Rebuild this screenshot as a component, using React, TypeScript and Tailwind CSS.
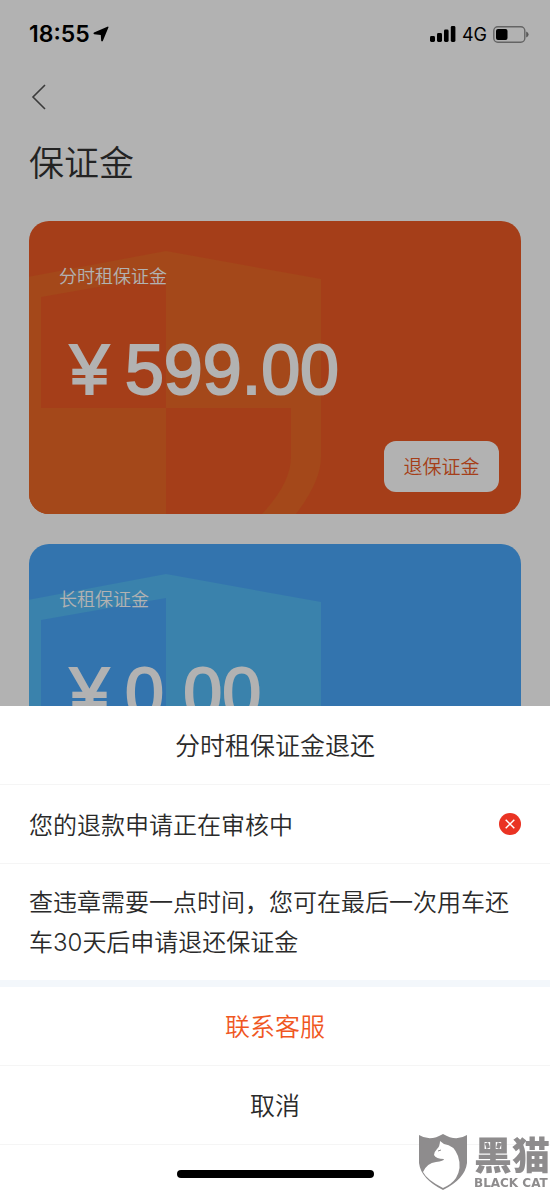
import { ReactNode } from "react";

const ShieldPattern = ({ className }: { className: string }) => (
  <svg
    viewBox="0 0 292 293"
    className={`absolute left-0 top-0 h-[293px] w-[292px] ${className}`}
    fill="currentColor"
    aria-hidden="true"
  >
    <path
      fillRule="evenodd"
      d="M-18 59 L137 30 L292 58 V236 Q292 260 267 293 H-18 Z M12 76 V187 H137 V54 Z M137 187 V293 H233 Q262 262 262 236 V187 Z"
    />
  </svg>
);

const StatusBar = () => (
  <div className="flex h-[68px] items-center justify-between pl-[29px] pr-[21px] font-['Inter',sans-serif] text-black">
    <div className="flex items-center gap-[3px]">
      <span className="text-[23px] font-semibold">18:55</span>
      <svg viewBox="0 0 16 16" className="h-4 w-4" aria-hidden="true">
        <path d="M15 .6 Q15.8 .6 15.4 1.6 L9.8 15 Q8.9 16 8.2 14.8 L7.8 8.9 L1.2 8.3 Q-.2 7.4 1 6.5 L14.4 .8 Z" />
      </svg>
    </div>
    <div className="flex items-center gap-[6px]">
      <svg viewBox="0 0 26 16" className="h-4 w-[26px]" aria-hidden="true">
        <rect x="0" y="10" width="5" height="6" rx="1.4" />
        <rect x="7" y="7" width="5" height="9" rx="1.4" />
        <rect x="14" y="3.5" width="4.6" height="12.5" rx="1.4" />
        <rect x="20.8" y="0" width="4.6" height="16" rx="1.4" />
      </svg>
      <span className="text-[18px]">4G</span>
      <svg viewBox="0 0 36 17" className="h-[17px] w-9" aria-hidden="true">
        <rect x=".8" y=".8" width="31" height="15.4" rx="4" fill="none" stroke="#909090" strokeWidth="1.4" />
        <rect x="3" y="3" width="11.5" height="11" rx="2" />
        <path d="M33.2 5.5 Q35.6 6.5 35.6 8.5 T33.2 11.5 Z" fill="#808080" />
      </svg>
    </div>
  </div>
);

type DepositCardProps = {
  label: string;
  amount: string;
  className: string;
  patternClassName: string;
  children?: ReactNode;
};

const DepositCard = ({ label, amount, className, patternClassName, children }: DepositCardProps) => (
  <section className={`relative h-[293px] overflow-hidden rounded-[20px] text-white ${className}`}>
    <ShieldPattern className={patternClassName} />
    <div className="relative flex h-full flex-col px-[30px] pt-[42px] pb-[22px]">
      <h2 className="text-lg leading-6 font-[350]">{label}</h2>
      <p className="mt-[43px] flex gap-4 pl-[11px] font-['Liberation_Sans',sans-serif] text-[70px] leading-[80px] [-webkit-text-stroke:2px_white]">
        <span>¥</span>
        <span>{amount}</span>
      </p>
      {children}
    </div>
  </section>
);

const RefundSheet = () => (
  <div
    role="dialog"
    aria-labelledby="sheet-title"
    className="fixed inset-x-0 bottom-0 bg-white pb-[45px] text-2xl font-[350] text-[#2a2a2a]"
  >
    <h2
      id="sheet-title"
      className="flex h-[79px] items-center justify-center border-b border-[#f5f5f5] text-[25px]"
    >
      分时租保证金退还
    </h2>
    <div className="flex h-[79px] items-center justify-between border-b border-[#f5f5f5] px-[29px]">
      <span>您的退款申请正在审核中</span>
      <svg viewBox="0 0 22 22" className="h-[22px] w-[22px]" aria-hidden="true">
        <circle cx="11" cy="11" r="11" fill="#ea3323" />
        <path d="M6.7 6.7 L15.3 15.3 M15.3 6.7 L6.7 15.3" stroke="#fff" strokeWidth="1.5" />
      </svg>
    </div>
    <p className="border-b-[7px] border-[#f3f7fb] px-[29px] pt-[17px] pb-[17px] leading-10">
      查违章需要一点时间，您可在最后一次用车还车
      <span className="font-['Inter',sans-serif]">30</span>
      天后申请退还保证金
    </p>
    <button
      type="button"
      className="block h-[79px] w-full border-b border-[#f5f5f5] text-[25px] text-[#f0571f]"
    >
      联系客服
    </button>
    <button type="button" className="block h-[79px] w-full border-b border-[#f5f5f5] text-[25px]">
      取消
    </button>
    <div className="absolute inset-x-0 bottom-3 mx-auto h-2 w-[197px] rounded-full bg-black" />
  </div>
);

const Watermark = () => (
  <div className="fixed right-0 bottom-0 flex items-end gap-[7px] text-[#8e8c8d]">
    <svg viewBox="0 0 48 56" className="h-14 w-12" aria-hidden="true">
      <path
        fill="currentColor"
        d="M0 1 Q11 8 24 0 Q37 8 48 1 V29 Q46 45 24 56 Q2 45 0 29 Z"
      />
      <path
        fill="#fff"
        d="M21 7 L25 10 Q35 11 39 22 Q43 34 37 44 Q33 50 24 54 Q8 46 4 38 Q8 29 17 28 Q25 27 25 25 Q17 25 15 21 Q15 18 18 15 Q21 12 21 7 Z"
      />
      <path d="M19 17 L22 16" stroke="currentColor" />
    </svg>
    <div className="flex flex-col gap-1">
      <div className="text-[38px] leading-[38px] font-black">黑猫</div>
      <div className="font-['DejaVu_Sans',sans-serif] text-xs leading-[14px] font-bold">BLACK CAT</div>
    </div>
  </div>
);

export default function App() {
  return (
    <div className="h-screen overflow-hidden bg-white font-['Noto_Sans_CJK_SC',sans-serif] text-[#333]">
      <StatusBar />
      <header className="px-[29px]">
        <button type="button" aria-label="返回" className="mt-4 block">
          <svg viewBox="0 0 20 26" className="h-[26px] w-5" fill="none" stroke="#555" strokeWidth="1.6" aria-hidden="true">
            <path d="M16 1 L4 13 L16 25" />
          </svg>
        </button>
        <h1 className="mt-[23px] text-[35px] leading-[56px] font-[350]">保证金</h1>
      </header>
      <main className="mt-8 flex flex-col gap-[30px] px-[29px]">
        <DepositCard
          label="分时租保证金"
          amount="599.00"
          className="bg-[#ec5a24]"
          patternClassName="text-[#eb6726]"
        >
          <button
            type="button"
            className="mt-auto -mr-2 h-[51px] w-[115px] self-end rounded-xl bg-white text-[19px] font-[350] text-[#ec5a24]"
          >
            退保证金
          </button>
        </DepositCard>
        <DepositCard
          label="长租保证金"
          amount="0.00"
          className="bg-[#49a7f9]"
          patternClassName="text-[#53baf7]"
        />
      </main>
      <div className="fixed inset-0 bg-black/30" />
      <RefundSheet />
      <Watermark />
    </div>
  );
}
